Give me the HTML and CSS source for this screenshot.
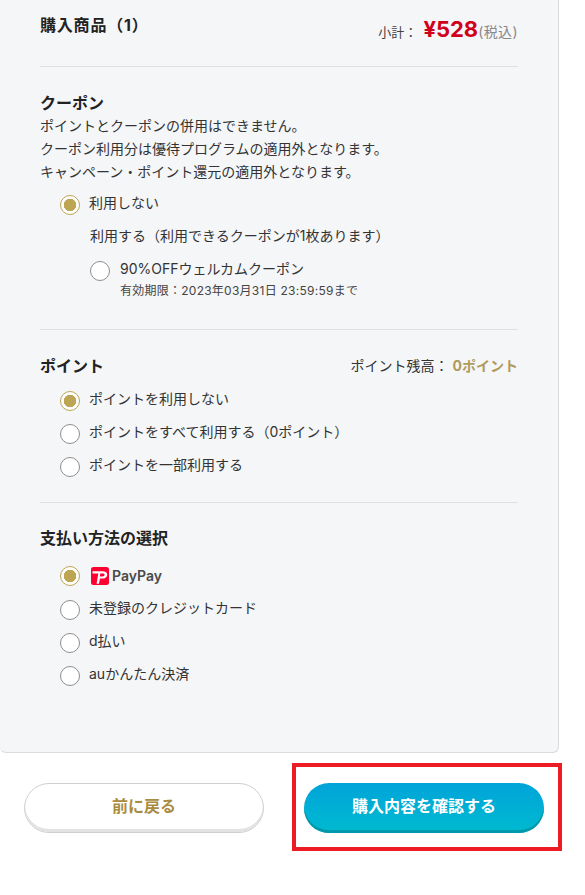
FILE: index.html
```html
<!DOCTYPE html>
<html lang="ja">
<head>
<meta charset="utf-8">
<title>購入内容</title>
<link rel="stylesheet" href="styles.css">
</head>
<body>
<main class="panel">
  <section class="summary">
    <h2 class="heading">購入商品（1）</h2>
    <p class="subtotal"><span class="sub-label">小計：</span><span class="price">¥528</span><span class="tax">(税込)</span></p>
  </section>

  <section class="section coupon">
    <h2 class="heading">クーポン</h2>
    <p class="note">ポイントとクーポンの併用はできません。<br>クーポン利用分は優待プログラムの適用外となります。<br>キャンペーン・ポイント還元の適用外となります。</p>
    <div class="options coupon-options">
      <div class="option"><span class="radio checked"></span><span class="label">利用しない</span></div>
      <p class="use-label">利用する（利用できるクーポンが1枚あります）</p>
      <div class="option coupon-item"><span class="radio"></span><div><div>90%OFFウェルカムクーポン</div><div class="expiry">有効期限：2023年03月31日 23:59:59まで</div></div></div>
    </div>
  </section>

  <section class="section points">
    <div class="head-row">
      <h2 class="heading">ポイント</h2>
      <p class="balance">ポイント残高： <b>0ポイント</b></p>
    </div>
    <div class="options">
      <div class="option"><span class="radio checked"></span><span class="label">ポイントを利用しない</span></div>
      <div class="option"><span class="radio"></span><span class="label">ポイントをすべて利用する（0ポイント）</span></div>
      <div class="option"><span class="radio"></span><span class="label">ポイントを一部利用する</span></div>
    </div>
  </section>

  <section class="section payment">
    <h2 class="heading">支払い方法の選択</h2>
    <div class="options">
      <div class="option paypay-option"><span class="radio checked"></span>
        <span class="paypay">
          <svg class="pp-icon" viewBox="0 0 18 18" width="18" height="18" aria-hidden="true"><rect width="18" height="18" rx="2.5" fill="#ff0033"/><path d="M1.5 4.2h10c3 0 4.8 1.4 4.8 3.5 0 2.4-2.2 3.9-5.2 3.9H8.9l-.9 5.1H5.6l1.7-10.2H1.5z M9.3 6.6l-.5 2.9h2.2c1.5 0 2.6-.7 2.6-1.7 0-.8-.8-1.2-2-1.2z" fill="#fff" fill-rule="evenodd"/></svg>
          <span class="pp-text">PayPay</span>
        </span>
      </div>
      <div class="option"><span class="radio"></span><span class="label">未登録のクレジットカード</span></div>
      <div class="option"><span class="radio"></span><span class="label">d払い</span></div>
      <div class="option"><span class="radio"></span><span class="label">auかんたん決済</span></div>
    </div>
  </section>
</main>

<div class="actions">
  <a class="btn btn-back">前に戻る</a>
  <div class="highlight"><a class="btn btn-next">購入内容を確認する</a></div>
</div>
</body>
</html>
```
FILE: styles.css
```css
* { box-sizing: border-box; }
html, body { margin: 0; padding: 0; background: #fff; }
body {
  width: 585px;
  height: 895px;
  overflow: hidden;
  font-family: Inter, "Noto Sans CJK JP", sans-serif;
  font-size: 14px;
  line-height: 22px;
  color: #333;
}
h2, p { margin: 0; font-weight: normal; }

.panel {
  width: 559px;
  height: 753px;
  padding: 0 40px;
  background: #f5f6f8;
  border: 1px solid #dcdcdc;
  border-width: 0 1px 1px 0;
  border-radius: 0 0 6px 6px;
}
.heading {
  font-size: 16px;
  font-weight: 700;
  line-height: 22px;
  color: #222;
}
.summary {
  height: 67px;
  padding-top: 14px;
  display: flex;
  justify-content: space-between;
  align-items: flex-start;
  border-bottom: 1px solid #dfdfdf;
}
.summary .heading { letter-spacing: .8px; }
.subtotal { display: flex; align-items: baseline; line-height: 30px; font-size: 13px; color: #444; }
.sub-label { margin-right: 6px; }
.price { font-size: 22px; font-weight: 700; color: #d0021b; }
.tax { font-size: 14px; letter-spacing: .4px; color: #888; }

.section { border-bottom: 1px solid #dfdfdf; }
.section:last-child { border-bottom: 0; }
.coupon { height: 263px; padding-top: 25px; }
.points { height: 173px; padding-top: 25px; }
.payment { padding-top: 24px; }

.note { font-size: 14px; line-height: 23px; }
.options { padding-left: 20px; }
.coupon-options { padding-top: 5px; }
.option { display: flex; align-items: center; gap: 9px; min-height: 33px; }
.label { padding-bottom: 3px; }
.radio {
  flex: none;
  width: 20px;
  height: 20px;
  border-radius: 50%;
  border: 1px solid #8e8e8e;
  background: #fff;
}
.radio.checked {
  border-color: #bda554;
  background: radial-gradient(circle, #bda554 0 6px, #fff 6.5px);
}
.use-label { padding-left: 30px; margin-top: -1px; line-height: 31px; }
.coupon-item { margin-left: 30px; gap: 10px; align-items: flex-start; padding-top: 7px; }
.coupon-item .radio { margin-top: 3px; }
.expiry { font-size: 12px; letter-spacing: .25px; line-height: 22px; color: #444; }

.head-row { display: flex; justify-content: space-between; align-items: center; }
.balance { font-size: 14px; }
.balance b { color: #b09a5b; font-weight: 700; }

.points .options { padding-top: 7px; }
.payment .options { padding-top: 10px; }
.paypay-option { margin-bottom: 1px; }

.paypay { display: inline-flex; align-items: center; gap: 3px; margin-left: 2px; }
.pp-text { font-weight: 600; font-size: 14px; color: #4a4a4a; }

.actions {
  display: flex;
  align-items: flex-start;
  padding: 10px 0 0 24px;
}
.btn {
  display: flex;
  align-items: center;
  justify-content: center;
  width: 240px;
  height: 50px;
  padding-bottom: 5px;
  border-radius: 25px;
  font-size: 16px;
  font-weight: 700;
}
.btn-back {
  margin-top: 20px;
  background: #fff;
  color: #a98c3f;
  border: 1px solid #cfcfcf;
  box-shadow: inset 0 -3px 0 #e3e3e3;
}
.btn-next {
  color: #fff;
  background: linear-gradient(#00a4d9, #00bad0);
  box-shadow: inset 0 -3px 0 #0099ab;
}
.highlight {
  margin-left: 28px;
  width: 270px;
  height: 88px;
  padding: 16px 0 0 8px;
  border: 4px solid #ed1c24;
}
```
